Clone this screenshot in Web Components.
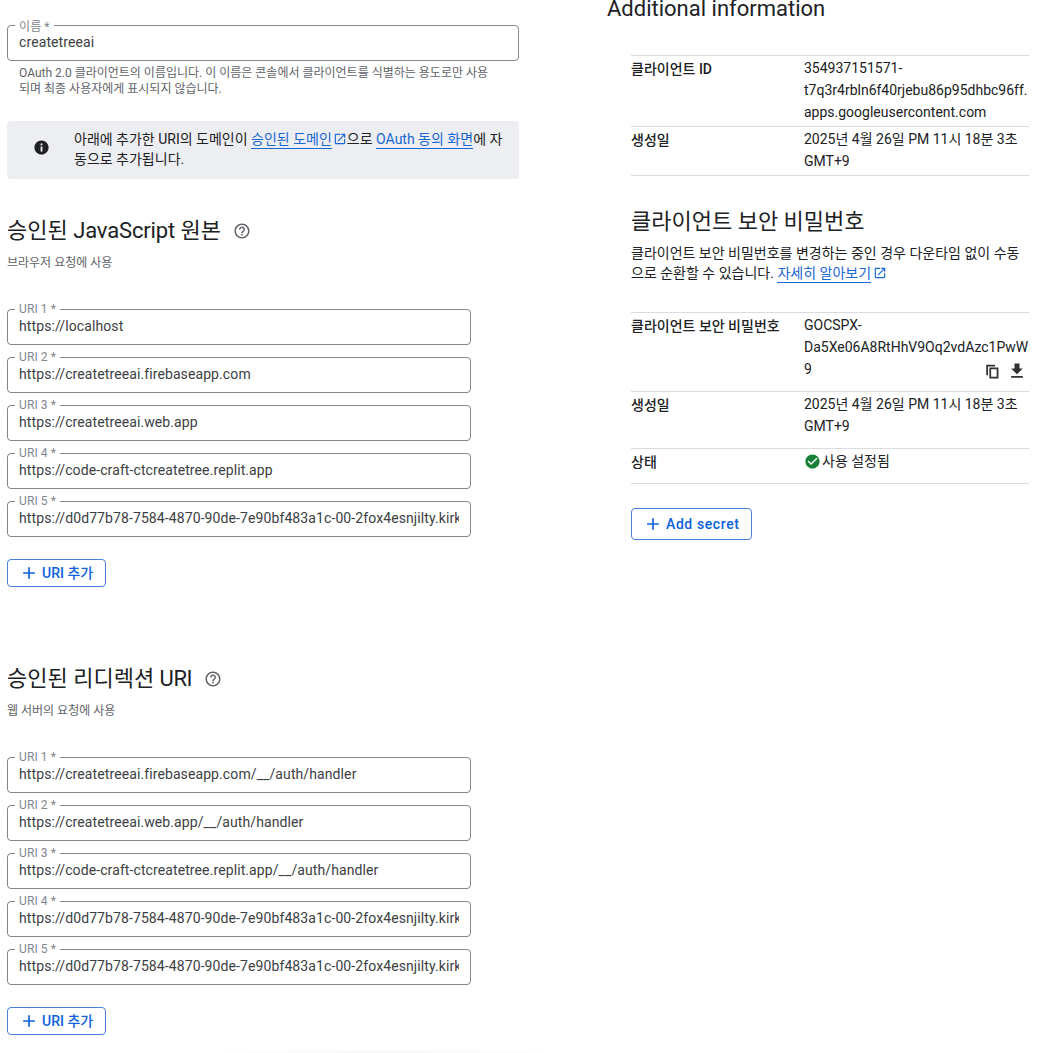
<!DOCTYPE html>
<html lang="ko">
<head>
<meta charset="utf-8">
<title>OAuth 클라이언트</title>
<style>
html,body{margin:0;background:#fff}
body{width:1047px;height:1053px;overflow:hidden;font-family:Roboto,"Noto Sans CJK KR",sans-serif;font-size:14px;color:#202124}
</style>
</head>
<body>
<client-page></client-page>
<script>
const define=(name,html,setup)=>{
  const t=document.createElement('template');
  t.innerHTML=html;
  customElements.define(name,class extends HTMLElement{
    connectedCallback(){
      if(this.shadowRoot)return;
      this.attachShadow({mode:'open'}).append(t.content.cloneNode(true));
      if(setup)setup(this,this.shadowRoot);
    }
  });
};

const ICONS={
  info:'M12 2C6.48 2 2 6.48 2 12s4.48 10 10 10 10-4.48 10-10S17.52 2 12 2zm1.3 15.5h-2.6v-7h2.6v7zm0-8.6h-2.6V6.3h2.6v2.6z',
  help:'M11 18h2v-2h-2v2zm1-16C6.48 2 2 6.48 2 12s4.48 10 10 10 10-4.48 10-10S17.52 2 12 2zm0 18c-4.41 0-8-3.59-8-8s3.59-8 8-8 8 3.59 8 8-3.59 8-8 8zm0-14c-2.21 0-4 1.79-4 4h2c0-1.1.9-2 2-2s2 .9 2 2c0 2-3 1.75-3 5h2c0-2.25 3-2.5 3-5 0-2.21-1.79-4-4-4z',
  open:'M19 19H5V5h7V3H5c-1.11 0-2 .9-2 2v14c0 1.1.89 2 2 2h14c1.1 0 2-.9 2-2v-7h-2v7zM14 3v2h3.59l-9.83 9.83 1.41 1.41L19 6.41V10h2V3h-7z',
  add:'M19 13h-6v6h-2v-6H5v-2h6V5h2v6h6v2z',
  copy:'M16 1H2v17h2.8V3.8H16V1zM21.5 5.5H7V23h14.5V5.5zM18.7 20.2H9.8V8.3h8.9v11.9z',
  download:'M19 9h-4V3H9v6H5l7 7 7-7zM5 18v2h14v-2H5z',
  check:'M12 2C6.48 2 2 6.48 2 12s4.48 10 10 10 10-4.48 10-10S17.52 2 12 2zm-2 15l-5-5 1.41-1.41L10 14.17l7.59-7.59L19 8l-9 9z'
};
define('ui-icon','<style>:host{display:inline-block;flex:none}svg{display:block;fill:currentColor}</style><svg viewBox="0 0 24 24"><path/></svg>',(el,r)=>{
  const s=r.querySelector('svg'),n=el.getAttribute('size')||18;
  s.setAttribute('width',n);s.setAttribute('height',n);
  r.querySelector('path').setAttribute('d',ICONS[el.getAttribute('name')]);
});

define('outlined-field',`<style>
:host{display:block;position:relative;box-sizing:border-box;height:36px;border:1px solid #80868b;border-radius:4px;padding:0 11px;letter-spacing:.1px}
label{position:absolute;left:7px;top:var(--label-top,-8px);padding:0 4px;background:#fff;font-size:12px;line-height:14px;color:#80868b;white-space:nowrap}
.value{overflow:hidden;white-space:nowrap;line-height:20px;padding-top:6px;color:#3c4043}
</style><label></label><div class="value"><slot></slot></div>`,(el,r)=>{r.querySelector('label').textContent=el.getAttribute('label')+' *'});

define('section-title',`<style>
:host{display:flex;align-items:center;height:28px;font-size:22px;line-height:28px;white-space:nowrap;gap:12px}
span{padding-top:2px}
ui-icon{color:#5f6368;margin-top:2px}
</style><span><slot></slot></span>`,(el,r)=>{
  if(el.hasAttribute('help')){const i=document.createElement('ui-icon');i.setAttribute('name','help');i.setAttribute('size','18');r.append(i)}
});

define('outline-button',`<style>
:host{display:flex;align-items:center;box-sizing:border-box;width:var(--w);height:var(--h);border:1px solid #4a80dc;border-radius:4px;color:#0b61dc;font-weight:500;padding-left:11px;gap:3px;white-space:nowrap}
span{padding-bottom:var(--lift,0px)}
</style><ui-icon name="add" size="20"></ui-icon><span><slot></slot></span>`);

define('text-link',`<style>
:host{display:inline;color:#1967d2}
span{border-bottom:1px solid #1967d2;padding-bottom:1px}
ui-icon{vertical-align:-2px;margin-left:var(--icon-gap,1px)}
</style><span><slot></slot></span>`,(el,r)=>{
  if(el.hasAttribute('external')){const i=document.createElement('ui-icon');i.setAttribute('name','open');i.setAttribute('size','14');r.append(i)}
});

define('info-banner',`<style>
:host{display:flex;box-sizing:border-box;width:512px;height:58px;background:#edeef2;border-radius:4px;padding:8px 0 0 25.5px;gap:24.5px;line-height:20px;white-space:nowrap}
ui-icon{margin-top:9.5px}
</style><ui-icon name="info" size="17"></ui-icon><div><slot></slot></div>`);

define('uri-section',`<style>
:host{display:block}
p{margin:11px 0 38px;font-size:12px;line-height:16px;color:#5f6368}
.list{display:flex;flex-direction:column;gap:12px;width:464px;margin-bottom:22px}
outline-button{--w:99px;--h:28px;--lift:2px}
</style><section-title help><slot name="title"></slot></section-title><p><slot name="hint"></slot></p>
<div class="list"><slot></slot></div><outline-button>URI 추가</outline-button>`);

define('info-row',`<style>
:host{display:flex;box-sizing:border-box;height:var(--h);border-top:1px solid #dadce0;padding-top:1px;line-height:22px;white-space:nowrap}
.key{width:173px;flex:none;font-weight:500;padding-top:1px}
.val{flex:1;min-width:0}
</style><div class="key"></div><div class="val"><slot></slot></div><slot name="actions"></slot>`,(el,r)=>{r.querySelector('.key').textContent=el.getAttribute('label')});

define('info-table',`<style>:host{display:block;border-bottom:1px solid #dadce0}</style><slot></slot>`);

define('client-page',`<style>
:host{display:flex;box-sizing:border-box;width:1047px;height:1053px;padding-left:7px;background:radial-gradient(ellipse 180px 4px at 385px 1053px,#f7f7f7,#fff) #fff}
.left{width:512px;padding-top:25px;flex:none}
.left>outlined-field{--label-top:-6px}
.left>p{margin:4px 0 24px 12px;font-size:12px;line-height:16px;color:#5f6368;white-space:nowrap}
uri-section{margin-top:37px}
uri-section+uri-section{margin-top:77px}
.right{width:422px;margin:-6px 0 0 88px;flex:none}
.body{padding-left:24px}
.right p{margin:8px 0 29px;line-height:20px;white-space:nowrap;--icon-gap:2px}
.g{letter-spacing:var(--ls,0)}
.first{margin:33px 0 31px}
outline-button{--w:121px;--h:32px;margin-top:24px;--ls:.6px}
.act{display:flex;gap:7px;align-items:center;height:22px;margin:46px 2px 0 0;color:#303134}
.ok{display:flex;align-items:center;gap:1px}
.ok ui-icon{color:#188038;margin-top:1px}
</style>
<div class="left">
<outlined-field label="이름">createtreeai</outlined-field>
<p>OAuth 2.0 클라이언트의 이름입니다. 이 이름은 콘솔에서 클라이언트를 식별하는 용도로만 사용<br>되며 최종 사용자에게 표시되지 않습니다.</p>
<info-banner>아래에 추가한 URI의 도메인이 <text-link external>승인된 도메인</text-link>으로 <text-link>OAuth 동의 화면</text-link>에 자<br>동으로 추가됩니다.</info-banner>
<uri-section><span slot="title">승인된 <span class="g" style="--ls:-.15px">JavaScript</span> 원본</span><span slot="hint">브라우저 요청에 사용</span>
<outlined-field label="URI 1">https://localhost</outlined-field>
<outlined-field label="URI 2">https://createtreeai.firebaseapp.com</outlined-field>
<outlined-field label="URI 3">https://createtreeai.web.app</outlined-field>
<outlined-field label="URI 4">https://code-craft-ctcreatetree.replit.app</outlined-field>
<outlined-field label="URI 5">https://d0d77b78-7584-4870-90de-7e90bf483a1c-00-2fox4esnjilty.kirk</outlined-field>
</uri-section>
<uri-section><span slot="title">승인된 리디렉션 <span class="g" style="--ls:-.5px">URI</span></span><span slot="hint">웹 서버의 요청에 사용</span>
<outlined-field label="URI 1">https://createtreeai.firebaseapp.com/__/auth/handler</outlined-field>
<outlined-field label="URI 2">https://createtreeai.web.app/__/auth/handler</outlined-field>
<outlined-field label="URI 3">https://code-craft-ctcreatetree.replit.app/__/auth/handler</outlined-field>
<outlined-field label="URI 4">https://d0d77b78-7584-4870-90de-7e90bf483a1c-00-2fox4esnjilty.kirk</outlined-field>
<outlined-field label="URI 5">https://d0d77b78-7584-4870-90de-7e90bf483a1c-00-2fox4esnjilty.kirk</outlined-field>
</uri-section>
</div>
<div class="right">
<section-title><span class="g">Additional information</span></section-title>
<div class="body">
<info-table class="first">
<info-row label="클라이언트 ID" style="--h:71px">354937151571-<br>t7q3r4rbln6f40rjebu86p95dhbc96ff.<br>apps.googleusercontent.com</info-row>
<info-row label="생성일" style="--h:49px">2025년 4월 26일 PM 11시 18분 3초<br>GMT+9</info-row>
</info-table>
<section-title>클라이언트 보안 비밀번호</section-title>
<p>클라이언트 보안 비밀번호를 변경하는 중인 경우 다운타임 없이 수동<br>으로 순환할 수 있습니다. <text-link external>자세히 알아보기</text-link></p>
<info-table>
<info-row label="클라이언트 보안 비밀번호" style="--h:79px">GOCSPX-<br>Da5Xe06A8RtHhV9Oq2vdAzc1PwW<br>9<span slot="actions" class="act" style="margin-left:-50px"><ui-icon name="copy" size="15"></ui-icon><ui-icon name="download" size="20"></ui-icon></span></info-row>
<info-row label="생성일" style="--h:57px">2025년 4월 26일 PM 11시 18분 3초<br>GMT+9</info-row>
<info-row label="상태" style="--h:35px"><span class="ok"><ui-icon name="check" size="17"></ui-icon>사용 설정됨</span></info-row>
</info-table>
<outline-button><span class="g">Add secret</span></outline-button>
</div>
</div>`);
</script>
</body>
</html>
